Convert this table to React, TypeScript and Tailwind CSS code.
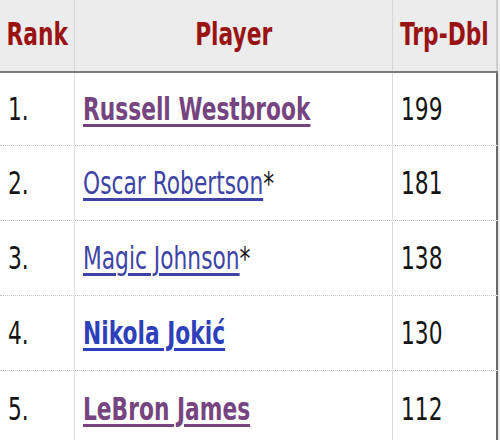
import React from "react";

type Row = {
  rank: string;
  name: string;
  star?: boolean;
  bold?: boolean;
  color: string;
  value: string;
  h: string;
};

const rows: Row[] = [
  { rank: "1.", name: "Russell Westbrook", bold: true, color: "text-[#76457f] decoration-[#76457f]", value: "199", h: "h-[73px]" },
  { rank: "2.", name: "Oscar Robertson", star: true, color: "text-[#3d44a6] decoration-[#3d44a6]", value: "181", h: "h-[75px]" },
  { rank: "3.", name: "Magic Johnson", star: true, color: "text-[#3d44a6] decoration-[#3d44a6]", value: "138", h: "h-[75px]" },
  { rank: "4.", name: "Nikola Jokić", bold: true, color: "text-[#2d3fbb] decoration-[#2d3fbb]", value: "130", h: "h-[75px]" },
  { rank: "5.", name: "LeBron James", bold: true, color: "text-[#76457f] decoration-[#76457f]", value: "112", h: "h-[75px]" },
];

export default function App() {
  return (
    <div className="w-[500px] h-[440px] overflow-hidden bg-[#ececec] font-['DejaVu_Sans',sans-serif] text-[32px] leading-none">
      <div className="w-[498px] bg-white">
        {/* header */}
        <div className="grid grid-cols-[75px_318px_105px] h-[73px] bg-[#ececec] border-b-2 border-[#7a7a7a] text-[#9a1313] font-bold">
          <div className="flex items-center justify-center border-r border-[#d6d6d6] pb-1">
            <span className="inline-block whitespace-nowrap scale-x-[0.68] origin-center">Rank</span>
          </div>
          <div className="flex items-center justify-center border-r border-[#d6d6d6] pb-1">
            <span className="inline-block whitespace-nowrap scale-x-[0.68] origin-center">Player</span>
          </div>
          <div className="flex items-center justify-center border-r-2 border-[#d0d0d0] pb-1">
            <span className="inline-block whitespace-nowrap scale-x-[0.68] origin-center">Trp-Dbl</span>
          </div>
        </div>
        {rows.map((r, i) => (
          <div
            key={r.rank}
            className={`grid grid-cols-[75px_318px_105px] ${r.h} ${i < rows.length - 1 ? "border-b border-dotted border-[#c4c4c4]" : ""} text-[#151515]`}
          >
            <div className="flex items-center pl-2 border-r border-[#dcdcdc]">
              <span className="inline-block whitespace-nowrap scale-x-[0.68] origin-left">{r.rank}</span>
            </div>
            <div className="flex items-center pl-2 border-r border-[#dcdcdc]">
              <span className="inline-block scale-x-[0.68] origin-left whitespace-nowrap">
                <a
                  href="#"
                  className={`${r.color} ${r.bold ? "font-bold" : ""} underline decoration-[3px] underline-offset-[4px]`}
                >
                  {r.name}
                </a>
                {r.star ? "*" : ""}
              </span>
            </div>
            <div className="flex items-center pl-2 border-r-2 border-[#6a6a6a]">
              <span className="inline-block whitespace-nowrap scale-x-[0.68] origin-left">{r.value}</span>
            </div>
          </div>
        ))}
      </div>
    </div>
  );
}
